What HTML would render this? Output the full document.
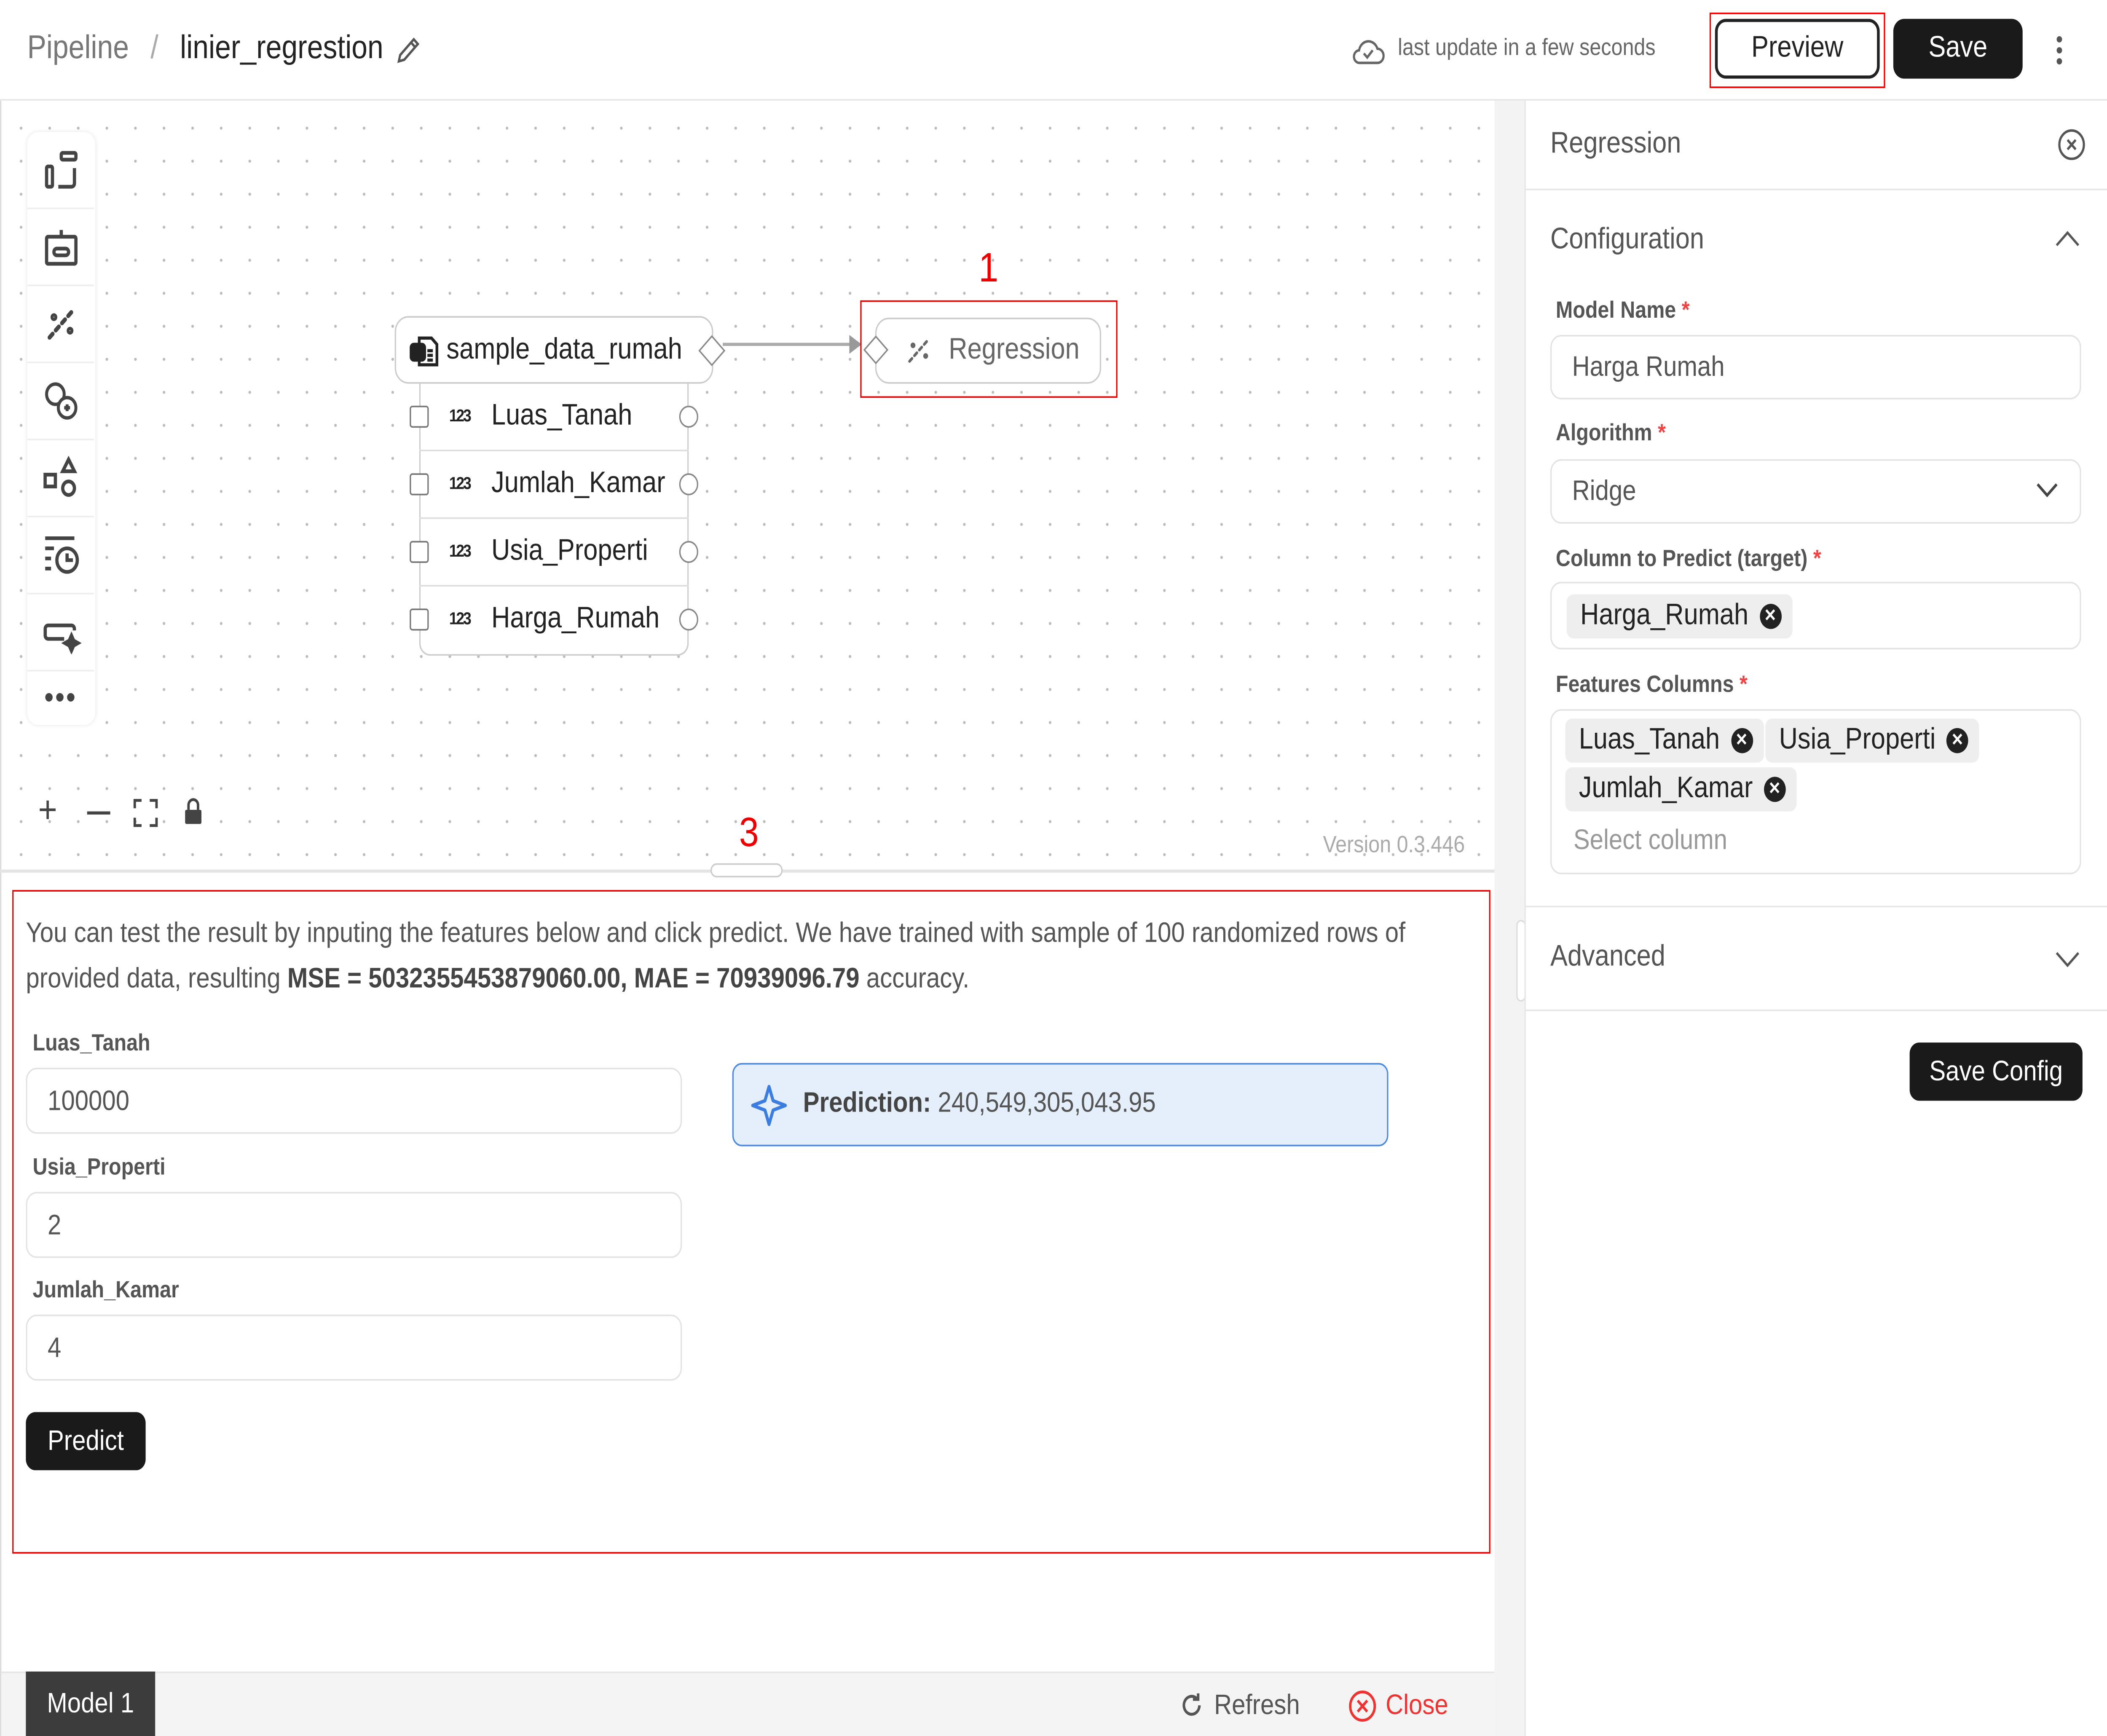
<!DOCTYPE html>
<html><head><meta charset="utf-8"><style>
*{box-sizing:border-box;margin:0;padding:0}
html,body{width:100%;height:100%;overflow:hidden;background:#fff}
#sv{position:fixed;left:0;top:0;width:100vw;height:100vh;display:block}
#w{position:relative;width:1548px;height:1104px;overflow:hidden;font-family:"Liberation Sans",sans-serif;color:#222;background:#fff}
.a{position:absolute}
.dots{background-color:#fff;background-image:radial-gradient(#bbb 0.8px,transparent 1.1px);background-size:21px 21px;background-position:5px 7px}
.lbl{font-size:15px;font-weight:bold;color:#555;white-space:nowrap}
.inp{border:1px solid #e3e3e3;border-radius:8px;background:#fff;font-size:18px;color:#555;padding-left:15px;display:flex;align-items:center;overflow:hidden}
.chip{display:inline-flex;align-items:center;background:#eee;border-radius:5px;height:28px;padding:0 8px 0 10px;font-size:19px;color:#222;white-space:nowrap}
.x{display:inline-block;width:16px;height:16px;border-radius:50%;background:#222;color:#fff;font-size:11px;line-height:16px;text-align:center;margin-left:8px;font-weight:bold}
.row{position:absolute;left:308px;width:198px;height:43px;border-bottom:1px solid #ddd}
.row .cb{position:absolute;left:-7px;top:14px;width:14px;height:14px;border:1.3px solid #777;border-radius:2px;background:#fff}
.row .n{position:absolute;left:22px;top:15px;font-size:11px;font-weight:bold;letter-spacing:-1px}
.row .t{position:absolute;left:53px;top:10px;font-size:19px;white-space:nowrap}
.row .c{position:absolute;right:-7px;top:14px;width:14px;height:14px;border:1.3px solid #888;border-radius:50%;background:#fff}
.tb{position:absolute;left:0;width:49px;height:49px;border-bottom:1px solid #eee;display:flex;align-items:center;justify-content:center}
.red{position:absolute;border:1.5px solid #e00}
.rn{position:absolute;color:#e00;font-size:26px}
</style></head><body>
<svg id="sv" xmlns="http://www.w3.org/2000/svg" viewBox="0 0 1548 1104" preserveAspectRatio="none"><foreignObject x="0" y="0" width="1548" height="1104"><div xmlns="http://www.w3.org/1999/xhtml" id="w">
<div class="a" style="left:0;top:0;width:1548px;height:64px;border-bottom:1px solid #e6e6e6;background:#fff"></div>
<div class="a" style="left:20px;top:19px;font-size:21px;color:#777;white-space:nowrap">Pipeline <span style="margin:0 10px;color:#aaa">/</span> <span style="color:#222">linier_regrestion</span></div>
<svg class="a" style="left:290px;top:22px" width="20" height="20" viewBox="0 0 20 20" fill="none" stroke="#555" stroke-width="1.6"><path d="M3 17l1-4L14 3l3 3L7 16z M12 5l3 3"/></svg>
<svg class="a" style="left:992px;top:21px" width="26" height="22" viewBox="0 0 26 22" fill="none" stroke="#666" stroke-width="1.6"><path d="M7 19h13a4.5 4.5 0 0 0 0-9 7 7 0 0 0-13.5 1A4 4 0 0 0 7 19z"/><path d="M10 13l2.5 2.5L16.5 11"/></svg>
<div class="a" style="left:1027px;top:22px;font-size:15px;color:#666;white-space:nowrap">last update in a few seconds</div>
<div class="red" style="left:1256px;top:8px;width:129px;height:48px"></div>
<div class="a" style="left:1260px;top:12px;width:121px;height:38px;border:2px solid #222;border-radius:8px;font-size:19px;text-align:center;line-height:34px">Preview</div>
<div class="a" style="left:1391px;top:12px;width:95px;height:38px;background:#1a1a1a;border-radius:8px;color:#fff;font-size:19px;text-align:center;line-height:38px">Save</div>
<div class="a" style="left:1511px;top:23px;width:4px;height:4px;background:#555;border-radius:50%;box-shadow:0 7px 0 #555,0 14px 0 #555"></div>
<div class="rn" style="left:1320px;top:64px">2</div>
<div class="a dots" style="left:0;top:64px;width:1098px;height:489px"></div>
<div class="a" style="left:0;top:64px;width:1px;height:1040px;background:#ddd"></div>
<div class="a" style="left:20px;top:84px;width:50px;height:377px;background:#fff;border-radius:8px;box-shadow:0 0 3px rgba(0,0,0,.1)">
<div class="tb" style="top:0"><svg width="28" height="28" viewBox="0 0 26 26" fill="none" stroke="#444" stroke-width="2.2"><rect x="13" y="3" width="10" height="4" rx="1"/><rect x="3" y="11" width="4" height="12" rx="1"/><path d="M11 23h9a2 2 0 0 0 2-2v-9"/></svg></div>
<div class="tb" style="top:49px"><svg width="28" height="28" viewBox="0 0 26 26" fill="none" stroke="#444" stroke-width="2.2"><rect x="3" y="7" width="20" height="16" rx="1"/><path d="M13 3v4"/><rect x="8" y="14" width="10" height="4" rx="2"/></svg></div>
<div class="tb" style="top:98px"><svg width="28" height="28" viewBox="0 0 26 26" fill="none" stroke="#444" stroke-width="2.6" stroke-linecap="round"><path d="M5 21L21 5" stroke-dasharray="3 3"/><circle cx="8" cy="9" r="1"/><circle cx="19" cy="17" r="1"/></svg></div>
<div class="tb" style="top:147px"><svg width="28" height="28" viewBox="0 0 26 26" fill="none" stroke="#444" stroke-width="2"><circle cx="9" cy="9" r="6"/><circle cx="17" cy="17" r="6" fill="#fff"/><path d="M15 17h4M17 15v4"/></svg></div>
<div class="tb" style="top:196px"><svg width="28" height="28" viewBox="0 0 26 26" fill="none" stroke="#444" stroke-width="2.2"><rect x="2" y="11" width="7" height="7"/><path d="M18 2l4 7h-8z"/><circle cx="18" cy="19" r="4"/></svg></div>
<div class="tb" style="top:245px"><svg width="30" height="28" viewBox="0 0 28 26" fill="none" stroke="#444" stroke-width="2.2"><path d="M3 3h20M3 9h6M3 15h4M3 21h4"/><circle cx="18" cy="16" r="7"/><path d="M18 12v4h4"/></svg></div>
<div class="tb" style="top:294px"><svg width="30" height="28" viewBox="0 0 28 26" fill="none" stroke="#444" stroke-width="2.2"><path d="M16 17H5a2 2 0 0 1-2-2v-4a2 2 0 0 1 2-2h16a2 2 0 0 1 2 2v1"/><path d="M21 15l1.5 3 3 1.5-3 1.5-1.5 3-1.5-3-3-1.5 3-1.5z" fill="#444"/></svg></div>
<div class="tb" style="top:343px;border:0;height:34px;font-size:20px;color:#444;letter-spacing:1px;line-height:10px">•••</div>
</div>
<div class="a" style="left:28px;top:505px;font-size:24px;color:#444;line-height:22px">+</div>
<div class="a" style="left:64px;top:516px;width:17px;height:2px;background:#444"></div>
<svg class="a" style="left:98px;top:508px" width="18" height="18" viewBox="0 0 18 18" fill="none" stroke="#444" stroke-width="1.8"><path d="M1 6V1h5M12 1h5v5M17 12v5h-5M6 17H1v-5"/></svg>
<svg class="a" style="left:135px;top:507px" width="14" height="18" viewBox="0 0 14 18"><path d="M3.5 8V5a3.5 3.5 0 0 1 7 0v3" fill="none" stroke="#444" stroke-width="1.8"/><rect x="1" y="8" width="12" height="9" rx="1" fill="#444"/></svg>
<div class="a" style="left:972px;top:529px;font-size:15px;color:#aaa;white-space:nowrap">Version 0.3.446</div>
<div class="a" style="left:308px;top:236px;width:198px;height:181px;border:1px solid #ccc;border-top:0;border-radius:0 0 8px 8px;background:#fff"></div>
<div class="row" style="top:244px"><div class="cb"></div><div class="n">123</div><div class="t">Luas_Tanah</div><div class="c"></div></div>
<div class="row" style="top:287px"><div class="cb"></div><div class="n">123</div><div class="t">Jumlah_Kamar</div><div class="c"></div></div>
<div class="row" style="top:330px"><div class="cb"></div><div class="n">123</div><div class="t">Usia_Properti</div><div class="c"></div></div>
<div class="row" style="top:373px;border:0"><div class="cb"></div><div class="n">123</div><div class="t">Harga_Rumah</div><div class="c"></div></div>
<div class="a" style="left:290px;top:201px;width:234px;height:43px;border:1px solid #ccc;border-radius:10px;background:#fff"></div>
<svg class="a" style="left:300px;top:211px" width="24" height="24" viewBox="0 0 24 24" fill="none" stroke="#222" stroke-width="2"><path d="M8 4h9l4 4v13H8z"/><rect x="2" y="8" width="10" height="10" rx="2" fill="#222"/><path d="M14 12h4M14 15h4M14 18h4"/></svg>
<div class="a" style="left:328px;top:212px;font-size:19px;white-space:nowrap">sample_data_rumah</div>
<div class="a" style="left:516px;top:216px;width:14px;height:14px;border:1.3px solid #888;background:#fff;transform:rotate(45deg)"></div>
<div class="a" style="left:531px;top:218px;width:96px;height:2px;background:#aaa"></div>
<div class="a" style="left:624px;top:213px;width:0;height:0;border-left:9px solid #999;border-top:6px solid transparent;border-bottom:6px solid transparent"></div>
<div class="red" style="left:632px;top:191px;width:189px;height:62px"></div>
<div class="a" style="left:643px;top:202px;width:166px;height:42px;border:1px solid #ccc;border-radius:10px;background:#fff"></div>
<div class="a" style="left:637px;top:216px;width:13px;height:13px;border:1.3px solid #888;background:#fff;transform:rotate(45deg)"></div>
<svg class="a" style="left:664px;top:212px" width="22" height="22" viewBox="0 0 26 26" fill="none" stroke="#666" stroke-width="2.2" stroke-linecap="round"><path d="M5 21L21 5" stroke-dasharray="3 3"/><circle cx="8" cy="9" r="1"/><circle cx="19" cy="17" r="1"/></svg>
<div class="a" style="left:697px;top:212px;font-size:19px;color:#666">Regression</div>
<div class="rn" style="left:719px;top:155px">1</div>
<div class="a" style="left:0;top:553px;width:1098px;height:2px;background:#e4e4e4"></div>
<div class="a" style="left:522px;top:549px;width:53px;height:9px;border:1px solid #ccc;border-radius:5px;background:#fff"></div>
<div class="rn" style="left:543px;top:514px">3</div>
<div class="red" style="left:9px;top:566px;width:1086px;height:422px"></div>
<div class="a" style="left:19px;top:579px;width:1065px;font-size:18px;color:#555;line-height:29px">You can test the result by inputing the features below and click predict. We have trained with sample of 100 randomized rows of provided data, resulting <b style="color:#444">MSE = 5032355453879060.00, MAE = 70939096.79</b> accuracy.</div>
<div class="a lbl" style="left:24px;top:655px">Luas_Tanah</div>
<div class="a inp" style="left:19px;top:679px;width:482px;height:42px">100000</div>
<div class="a lbl" style="left:24px;top:734px">Usia_Properti</div>
<div class="a inp" style="left:19px;top:758px;width:482px;height:42px">2</div>
<div class="a lbl" style="left:24px;top:812px">Jumlah_Kamar</div>
<div class="a inp" style="left:19px;top:836px;width:482px;height:42px">4</div>
<div class="a" style="left:19px;top:898px;width:88px;height:37px;background:#1a1a1a;border-radius:7px;color:#fff;font-size:18px;text-align:center;line-height:37px">Predict</div>
<div class="a" style="left:538px;top:676px;width:482px;height:53px;background:#e5effc;border:1.5px solid #4a8ae0;border-radius:7px"></div>
<svg class="a" style="left:550px;top:688px" width="30" height="30" viewBox="0 0 30 30" fill="none" stroke="#3b7ee0" stroke-width="2.2" stroke-linejoin="round"><path d="M15 3l3 9 9 3-9 3-3 9-3-9-9-3 9-3z"/></svg>
<div class="a" style="left:590px;top:691px;font-size:18px;color:#555;white-space:nowrap"><b style="color:#444">Prediction:</b> 240,549,305,043.95</div>
<div class="a" style="left:1px;top:1063px;width:1097px;height:41px;background:#f4f4f4;border-top:1px solid #e6e6e6"></div>
<div class="a" style="left:19px;top:1063px;width:95px;height:41px;background:#3c3c3c;color:#fff;font-size:18px;text-align:center;line-height:41px">Model 1</div>
<svg class="a" style="left:866px;top:1075px" width="19" height="19" viewBox="0 0 20 20" fill="none" stroke="#555" stroke-width="2"><path d="M16 10a6 6 0 1 1-2-4.5"/><path d="M15 2v4h-4"/></svg>
<div class="a" style="left:892px;top:1074px;font-size:18px;color:#555">Refresh</div>
<svg class="a" style="left:990px;top:1074px" width="22" height="22" viewBox="0 0 22 22" fill="none" stroke="#e33" stroke-width="1.8"><circle cx="11" cy="11" r="9"/><path d="M7.5 7.5l7 7M14.5 7.5l-7 7"/></svg>
<div class="a" style="left:1018px;top:1074px;font-size:18px;color:#e33">Close</div>
<div class="a" style="left:1098px;top:64px;width:22px;height:1040px;background:#f3f3f3"></div>
<div class="a" style="left:1114px;top:585px;width:7px;height:52px;border:1px solid #ddd;border-radius:4px;background:#fff"></div>
<div class="a" style="left:1120px;top:64px;width:428px;height:1040px;background:#fff;border-left:1px solid #e6e6e6"></div>
<div class="a" style="left:1139px;top:81px;font-size:19px;color:#555">Regression</div>
<svg class="a" style="left:1511px;top:81px" width="22" height="22" viewBox="0 0 22 22" fill="none" stroke="#555" stroke-width="1.6"><circle cx="11" cy="11" r="9"/><path d="M8 8l6 6M14 8l-6 6"/></svg>
<div class="a" style="left:1120px;top:120px;width:428px;height:1px;background:#e6e6e6"></div>
<div class="a" style="left:1139px;top:142px;font-size:19px;color:#555">Configuration</div>
<svg class="a" style="left:1509px;top:145px" width="20" height="14" viewBox="0 0 20 14" fill="none" stroke="#555" stroke-width="1.6"><path d="M2 11l8-8 8 8"/></svg>
<div class="a lbl" style="left:1143px;top:189px">Model Name <span style="color:#e44">*</span></div>
<div class="a inp" style="left:1139px;top:213px;width:390px;height:41px">Harga Rumah</div>
<div class="a lbl" style="left:1143px;top:267px">Algorithm <span style="color:#e44">*</span></div>
<div class="a inp" style="left:1139px;top:292px;width:390px;height:41px">Ridge</div>
<svg class="a" style="left:1495px;top:306px" width="18" height="12" viewBox="0 0 18 12" fill="none" stroke="#444" stroke-width="1.8"><path d="M2 2l7 7 7-7"/></svg>
<div class="a lbl" style="left:1143px;top:347px">Column to Predict (target) <span style="color:#e44">*</span></div>
<div class="a inp" style="left:1139px;top:370px;width:390px;height:43px;padding-left:11px"><span class="chip">Harga_Rumah<span class="x">✕</span></span></div>
<div class="a lbl" style="left:1143px;top:427px">Features Columns <span style="color:#e44">*</span></div>
<div class="a" style="left:1139px;top:451px;width:390px;height:105px;border:1px solid #e3e3e3;border-radius:8px"></div>
<div class="a" style="left:1150px;top:457px"><span class="chip">Luas_Tanah<span class="x">✕</span></span></div>
<div class="a" style="left:1297px;top:457px"><span class="chip">Usia_Properti<span class="x">✕</span></span></div>
<div class="a" style="left:1150px;top:488px"><span class="chip">Jumlah_Kamar<span class="x">✕</span></span></div>
<div class="a" style="left:1156px;top:524px;font-size:18px;color:#999">Select column</div>
<div class="a" style="left:1120px;top:576px;width:428px;height:1px;background:#e6e6e6"></div>
<div class="a" style="left:1139px;top:598px;font-size:19px;color:#555">Advanced</div>
<svg class="a" style="left:1509px;top:603px" width="20" height="14" viewBox="0 0 20 14" fill="none" stroke="#555" stroke-width="1.6"><path d="M2 3l8 8 8-8"/></svg>
<div class="a" style="left:1120px;top:642px;width:428px;height:1px;background:#e6e6e6"></div>
<div class="a" style="left:1403px;top:663px;width:127px;height:37px;background:#1a1a1a;border-radius:7px;color:#fff;font-size:18px;text-align:center;line-height:37px">Save Config</div>
</div></foreignObject></svg>
</body></html>
